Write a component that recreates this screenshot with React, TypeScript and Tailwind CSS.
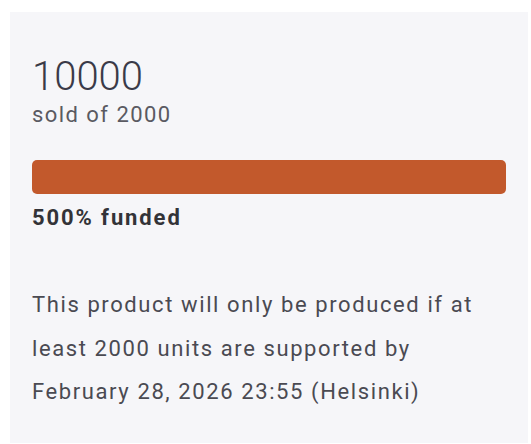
export default function App() {
  const sold = 10000;
  const goal = 2000;
  const pct = Math.round((sold / goal) * 100);

  return (
    <div className="bg-white min-h-[444px] pt-[12px] pl-[10px] pr-[3px] font-['Roboto',sans-serif]">
      <div className="bg-[#f6f6f9] h-[431px] px-[22px] pt-[41px]">
        {/* Counter */}
        <div className="text-[40px] leading-[48px] font-light text-[#3a3a48]">{sold}</div>
        <div className="text-[22px] leading-[28px] text-[#5a5a62] tracking-[1.45px]">sold of {goal}</div>

        {/* Progress */}
        <div className="mt-[31px] h-[34px] w-full rounded-[5px] bg-[#c2592c]" />
        <div className="mt-[10px] text-[22px] leading-[28px] font-bold text-[#333338] tracking-[1.9px]">{pct}% funded</div>

        {/* Info */}
        <p className="mt-[51px] text-[22px] leading-[43.5px] text-[#4a4a52] tracking-[1.6px]">
          This product will only be produced if at least {goal} units are supported by February 28, 2026 23:55 (Helsinki)
        </p>
      </div>
    </div>
  );
}
